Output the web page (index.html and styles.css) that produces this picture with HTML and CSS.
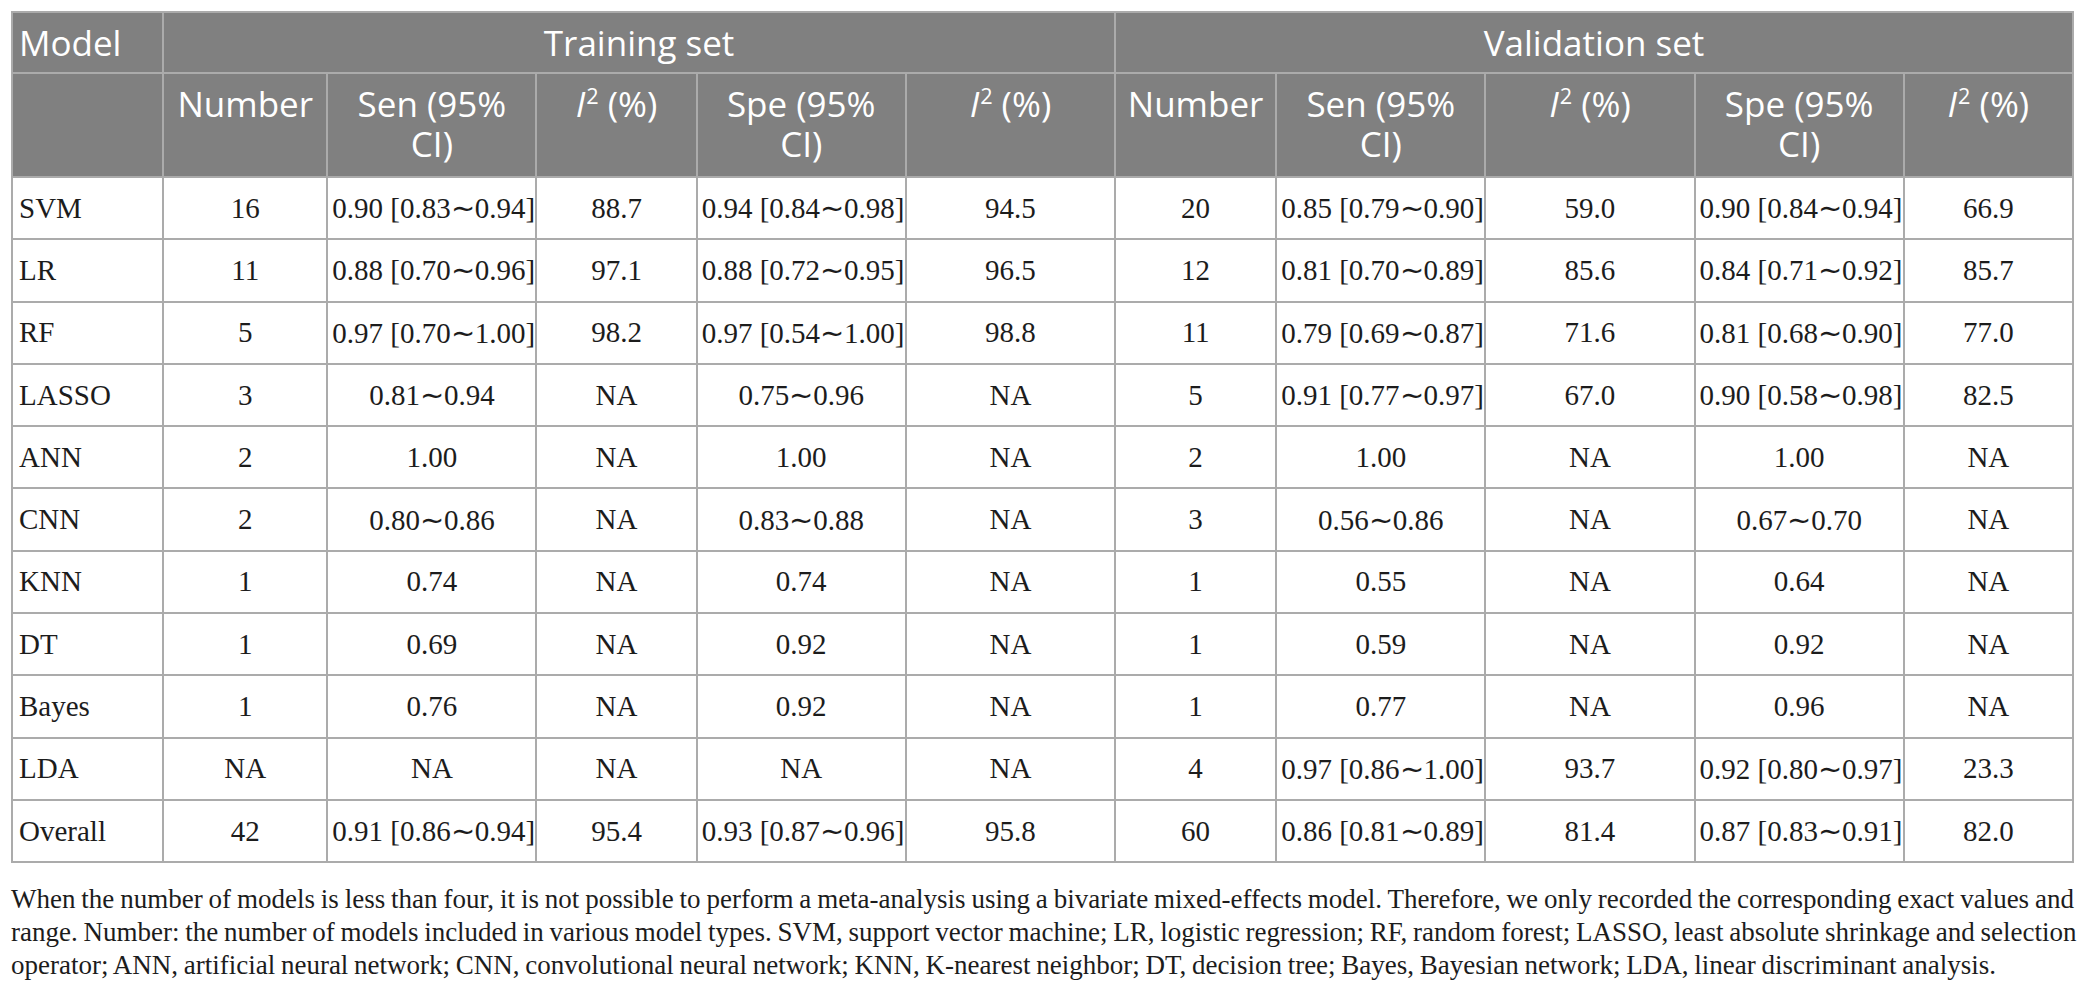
FILE: index.html
```html
<!DOCTYPE html>
<html lang="en">
<head>
  <meta charset="UTF-8" />
  <title>Model performance summary</title>
  <link rel="stylesheet" href="styles.css">
</head>
<body>
  <div class="page">
    <table class="results">
      <colgroup>
        <col class="c-model">
        <col class="c-num">
        <col class="c-wide">
        <col class="c-i2">
        <col class="c-wide">
        <col class="c-wide">
        <col class="c-num2">
        <col class="c-wide">
        <col class="c-wide">
        <col class="c-wide">
        <col class="c-last">
      </colgroup>
      <thead>
        <tr class="head-top">
          <th class="left">Model</th>
          <th colspan="5">Training set</th>
          <th colspan="5">Validation set</th>
        </tr>
        <tr class="head-sub">
          <th></th>
          <th>Number</th>
          <th>Sen (95% CI)</th>
          <th><i>I</i><sup>2</sup> (%)</th>
          <th>Spe (95% CI)</th>
          <th><i>I</i><sup>2</sup> (%)</th>
          <th>Number</th>
          <th>Sen (95% CI)</th>
          <th><i>I</i><sup>2</sup> (%)</th>
          <th>Spe (95% CI)</th>
          <th><i>I</i><sup>2</sup> (%)</th>
        </tr>
      </thead>
      <tbody>
        <tr>
          <td class="left">SVM</td><td>16</td><td>0.90 [0.83∼0.94]</td><td>88.7</td><td>0.94 [0.84∼0.98]</td><td>94.5</td>
          <td>20</td><td>0.85 [0.79∼0.90]</td><td>59.0</td><td>0.90 [0.84∼0.94]</td><td>66.9</td>
        </tr>
        <tr>
          <td class="left">LR</td><td>11</td><td>0.88 [0.70∼0.96]</td><td>97.1</td><td>0.88 [0.72∼0.95]</td><td>96.5</td>
          <td>12</td><td>0.81 [0.70∼0.89]</td><td>85.6</td><td>0.84 [0.71∼0.92]</td><td>85.7</td>
        </tr>
        <tr>
          <td class="left">RF</td><td>5</td><td>0.97 [0.70∼1.00]</td><td>98.2</td><td>0.97 [0.54∼1.00]</td><td>98.8</td>
          <td>11</td><td>0.79 [0.69∼0.87]</td><td>71.6</td><td>0.81 [0.68∼0.90]</td><td>77.0</td>
        </tr>
        <tr>
          <td class="left">LASSO</td><td>3</td><td>0.81∼0.94</td><td>NA</td><td>0.75∼0.96</td><td>NA</td>
          <td>5</td><td>0.91 [0.77∼0.97]</td><td>67.0</td><td>0.90 [0.58∼0.98]</td><td>82.5</td>
        </tr>
        <tr>
          <td class="left">ANN</td><td>2</td><td>1.00</td><td>NA</td><td>1.00</td><td>NA</td>
          <td>2</td><td>1.00</td><td>NA</td><td>1.00</td><td>NA</td>
        </tr>
        <tr>
          <td class="left">CNN</td><td>2</td><td>0.80∼0.86</td><td>NA</td><td>0.83∼0.88</td><td>NA</td>
          <td>3</td><td>0.56∼0.86</td><td>NA</td><td>0.67∼0.70</td><td>NA</td>
        </tr>
        <tr>
          <td class="left">KNN</td><td>1</td><td>0.74</td><td>NA</td><td>0.74</td><td>NA</td>
          <td>1</td><td>0.55</td><td>NA</td><td>0.64</td><td>NA</td>
        </tr>
        <tr>
          <td class="left">DT</td><td>1</td><td>0.69</td><td>NA</td><td>0.92</td><td>NA</td>
          <td>1</td><td>0.59</td><td>NA</td><td>0.92</td><td>NA</td>
        </tr>
        <tr>
          <td class="left">Bayes</td><td>1</td><td>0.76</td><td>NA</td><td>0.92</td><td>NA</td>
          <td>1</td><td>0.77</td><td>NA</td><td>0.96</td><td>NA</td>
        </tr>
        <tr>
          <td class="left">LDA</td><td>NA</td><td>NA</td><td>NA</td><td>NA</td><td>NA</td>
          <td>4</td><td>0.97 [0.86∼1.00]</td><td>93.7</td><td>0.92 [0.80∼0.97]</td><td>23.3</td>
        </tr>
        <tr>
          <td class="left">Overall</td><td>42</td><td>0.91 [0.86∼0.94]</td><td>95.4</td><td>0.93 [0.87∼0.96]</td><td>95.8</td>
          <td>60</td><td>0.86 [0.81∼0.89]</td><td>81.4</td><td>0.87 [0.83∼0.91]</td><td>82.0</td>
        </tr>
      </tbody>
    </table>

    <p class="note">
      <span class="line">When the number of models is less than four, it is not possible to perform a meta-analysis using a bivariate mixed-effects model. Therefore, we only recorded the corresponding exact values and</span>
      <span class="line">range. Number: the number of models included in various model types. SVM, support vector machine; LR, logistic regression; RF, random forest; LASSO, least absolute shrinkage and selection</span>
      <span class="line last">operator; ANN, artificial neural network; CNN, convolutional neural network; KNN, K-nearest neighbor; DT, decision tree; Bayes, Bayesian network; LDA, linear discriminant analysis.</span>
    </p>
  </div>
</body>
</html>
```

FILE: styles.css
```css
:root {
  --head-bg: #808080;
  --rule: #ababab;
  --ink: #1c1c1c;
}

body {
  margin: 0;
  background: #fff;
  color: var(--ink);
  font-family: "Liberation Serif", "Times New Roman", serif;
}

.page {
  width: 2063px;
  padding: 11px 0 0 11px;
}

.results {
  width: 2063px;
  table-layout: fixed;
  border-collapse: collapse;
  border: 2px solid var(--rule);
}

.c-model { width: 151px; }
.c-num   { width: 164px; }
.c-wide  { width: 209px; }
.c-i2    { width: 160px; }
.c-num2  { width: 161px; }
.c-last  { width: 169px; }

.results th,
.results td {
  border: 2px solid var(--rule);
}

/* cabeceras grises */
.results th {
  background: var(--head-bg);
  color: #fff;
  font-family: "Open Sans", "Liberation Sans", sans-serif;
  font-weight: 400;
  font-size: 35px;
  line-height: 40px;
  text-align: center;
  vertical-align: top;
  padding: 10px 8px 9px;
}

.head-sub th {
  padding-bottom: 12px;
}

.results th sup {
  font-size: 0.62em;
  line-height: 0;
  vertical-align: 0.62em;
  margin-left: 1px;
}

.results th i {
  font-style: italic;
}

.results td {
  height: 60.3px;
  padding: 0 4px;
  font-size: 29px;
  text-align: center;
  vertical-align: middle;
  white-space: nowrap;
}

.results .left {
  text-align: left;
  padding-left: 6px;
}

.note {
  margin: 20px 0 0;
  font-size: 27px;
  line-height: 33px;
  word-spacing: -1px;
}

.note .line {
  display: block;
  white-space: nowrap;
  text-align: justify;
  text-align-last: justify;
}

.note .line.last {
  text-align-last: left;
}
```
